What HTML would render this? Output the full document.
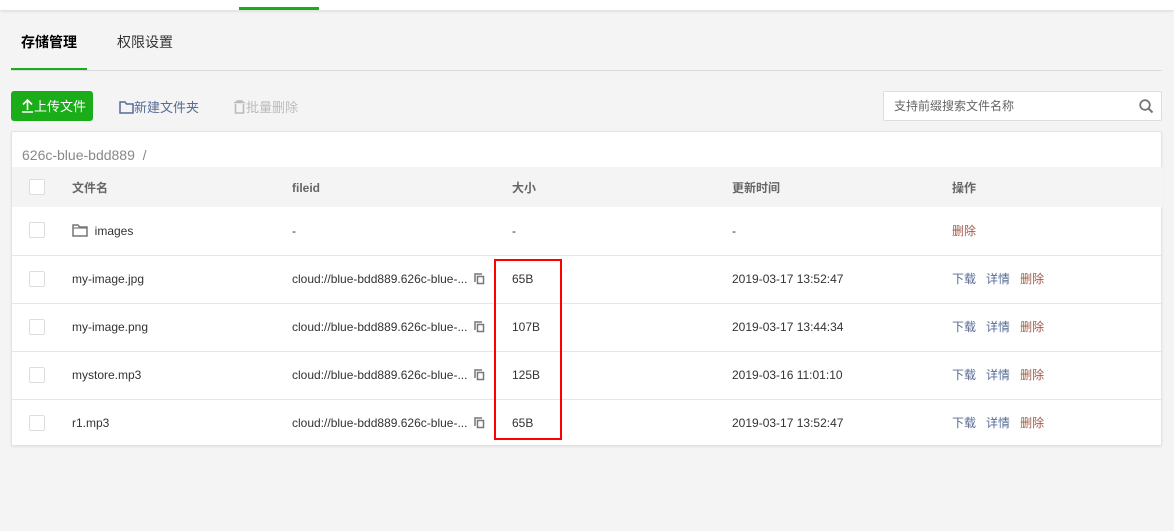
<!DOCTYPE html>
<html><head><meta charset="utf-8"><style>
*{margin:0;padding:0;box-sizing:border-box}
body{width:1174px;height:531px;background:#f4f4f4;font-family:"Liberation Sans","Noto Sans CJK SC",sans-serif;font-size:12px;color:#333;position:relative;overflow:hidden}
.abs{position:absolute}
.top{left:0;top:0;width:1174px;height:10px;background:#fff;box-shadow:0 1px 3px rgba(0,0,0,.12)}
.tab{top:32px;font-size:14px}
.card{left:11px;top:131px;width:1151px;height:315px;background:#fff;border:1px solid #e3e3e3;border-radius:2px;box-shadow:0 1px 2px rgba(0,0,0,.08)}
.row{position:absolute;left:0;width:1151px;height:48px;border-top:1px solid #e6e6e6}
.row span{position:absolute;top:15px;line-height:16px}
.cb{position:absolute;left:17px;top:15px;width:16px;height:16px;border:1px solid #ddd;border-radius:2px;background:#fff}
.a{color:#576b95}.d{color:#a25a4b}
</style></head><body>
<div class="abs top"></div>
<div class="abs" style="left:239px;top:7px;width:80px;height:3px;background:#1aad19"></div>
<div class="abs tab" style="left:21px;color:#000;font-weight:bold">存储管理</div>
<div class="abs tab" style="left:117px;color:#333">权限设置</div>
<div class="abs" style="left:11px;top:70px;width:1151px;height:1px;background:#ddd"></div>
<div class="abs" style="left:11px;top:68px;width:76px;height:2px;background:#1aad19"></div>
<div class="abs" style="left:11px;top:91px;width:82px;height:30px;background:#1aad19;border-radius:3px;color:#fff;font-size:13px;line-height:31px;padding-left:10px">
<svg width="13" height="14" style="vertical-align:-2px" viewBox="0 0 13 14"><path d="M6.5 1v10M2 5.5 6.5 1 11 5.5M1 13h11" stroke="#fff" stroke-width="1.6" fill="none"/></svg>上传文件</div>
<div class="abs" style="left:119px;top:97px;font-size:13px;color:#576b95">
<svg width="15" height="13" style="vertical-align:-2px" viewBox="0 0 15 13"><path d="M1 1h5l1.5 2H14v9H1z" stroke="#576b95" stroke-width="1.5" fill="none"/></svg>新建文件夹</div>
<div class="abs" style="left:233px;top:97px;font-size:13px;color:#bbb">
<svg width="13" height="14" style="vertical-align:-2px" viewBox="0 0 13 14"><path d="M1 2.5h11M4 2.5V1h5v1.5M2.5 4v9h8V4" stroke="#bbb" stroke-width="1.6" fill="none"/></svg>批量删除</div>
<div class="abs" style="left:883px;top:91px;width:279px;height:30px;background:#fff;border:1px solid #ddd;border-radius:2px;color:#666;line-height:28px;padding-left:10px">支持前缀搜索文件名称
<svg class="abs" style="right:7px;top:7px" width="15" height="15" viewBox="0 0 15 15"><circle cx="6" cy="6" r="4.8" stroke="#777" stroke-width="1.8" fill="none"/><path d="M9.5 9.5 13.5 13.5" stroke="#777" stroke-width="2"/></svg></div>
<div class="abs card">
<div class="abs" style="left:10px;top:15px;font-size:14px;color:#888">626c-blue-bdd889&nbsp; /</div>
<div class="row" style="top:35px;height:40px;background:#f4f4f4;border:none;font-weight:bold;color:#666">
<div class="cb" style="top:12px"></div>
<span style="left:60px;top:13px">文件名</span><span style="left:280px;top:13px">fileid</span><span style="left:500px;top:13px">大小</span><span style="left:720px;top:13px">更新时间</span><span style="left:940px;top:13px">操作</span></div>
<div class="row" style="top:75px;border:none"><div class="cb"></div>
<span style="left:60px;top:16px"><svg width="16" height="13" style="vertical-align:-2px" viewBox="0 0 16 13"><path d="M1 1h5l1.5 2H15v9H1z" stroke="#777" stroke-width="1.5" fill="none"/><path d="M1 4h14" stroke="#777" stroke-width="1.2"/></svg>&nbsp; images</span>
<span style="left:280px;top:16px">-</span><span style="left:500px;top:16px">-</span><span style="left:720px;top:16px">-</span><span style="left:940px;top:16px" class="d">删除</span></div>
<div class="row" style="top:123px"><div class="cb"></div><span style="left:60px">my-image.jpg</span><span style="left:280px">cloud://blue-bdd889.626c-blue-...</span><span style="left:500px">65B</span><span style="left:720px">2019-03-17 13:52:47</span><span style="left:940px"><b class="a" style="font-weight:normal">下载</b>&nbsp;&nbsp; <b class="a" style="font-weight:normal">详情</b>&nbsp;&nbsp; <b class="d" style="font-weight:normal">删除</b></span></div>
<div class="row" style="top:171px"><div class="cb"></div><span style="left:60px">my-image.png</span><span style="left:280px">cloud://blue-bdd889.626c-blue-...</span><span style="left:500px">107B</span><span style="left:720px">2019-03-17 13:44:34</span><span style="left:940px"><b class="a" style="font-weight:normal">下载</b>&nbsp;&nbsp; <b class="a" style="font-weight:normal">详情</b>&nbsp;&nbsp; <b class="d" style="font-weight:normal">删除</b></span></div>
<div class="row" style="top:219px"><div class="cb"></div><span style="left:60px">mystore.mp3</span><span style="left:280px">cloud://blue-bdd889.626c-blue-...</span><span style="left:500px">125B</span><span style="left:720px">2019-03-16 11:01:10</span><span style="left:940px"><b class="a" style="font-weight:normal">下载</b>&nbsp;&nbsp; <b class="a" style="font-weight:normal">详情</b>&nbsp;&nbsp; <b class="d" style="font-weight:normal">删除</b></span></div>
<div class="row" style="top:267px"><div class="cb"></div><span style="left:60px">r1.mp3</span><span style="left:280px">cloud://blue-bdd889.626c-blue-...</span><span style="left:500px">65B</span><span style="left:720px">2019-03-17 13:52:47</span><span style="left:940px"><b class="a" style="font-weight:normal">下载</b>&nbsp;&nbsp; <b class="a" style="font-weight:normal">详情</b>&nbsp;&nbsp; <b class="d" style="font-weight:normal">删除</b></span></div>
</div>
<svg class="abs" style="left:474px;top:273px" width="11" height="156" viewBox="0 0 11 156">
<g fill="none" stroke="#777" stroke-width="1.5"><g id="c"><path d="M1 9V1h7"/><rect x="3.5" y="3.5" width="6" height="7"/></g>
<use href="#c" y="48"/><use href="#c" y="96"/><use href="#c" y="144"/></g></svg>
<div class="abs" style="left:494px;top:259px;width:68px;height:181px;border:2px solid #f00"></div>
</body></html>
